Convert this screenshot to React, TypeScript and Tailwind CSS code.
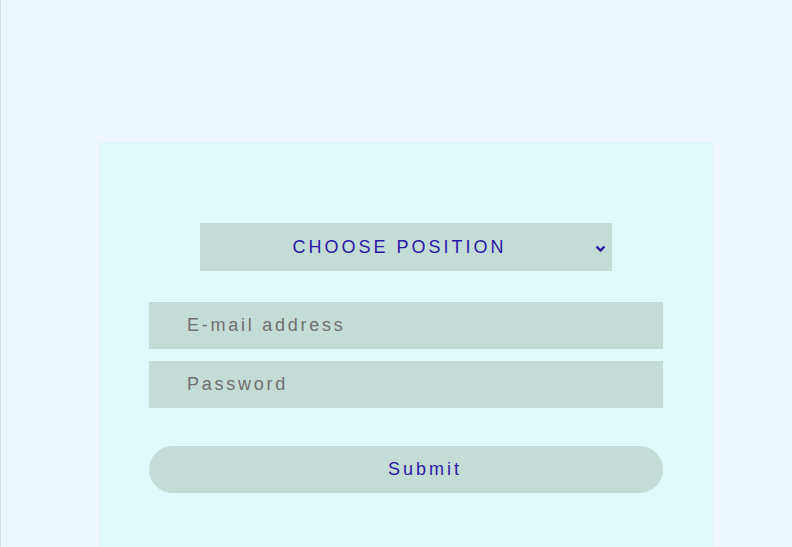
import * as React from "react";

const fieldClass =
    "h-[47px] w-full bg-[#c4dcd6] pl-[38px] text-[18px] tracking-[2.75px] text-[#6f6f6f] outline-none placeholder:text-[#6f6f6f]";

const PositionSelect = () => (
    <div className="relative h-[48px] w-[412px] bg-[#c4dcd6]">
        <div className="flex h-full items-center justify-center pr-[13px] text-[18px] tracking-[3px] text-[#2a18a8]">
            {"CHOOSE POSITION"}
        </div>
        <svg
            className="absolute right-[6px] top-[22px]"
            width="11"
            height="8"
            viewBox="0 0 11 8"
            fill="none"
            stroke="#2a18a8"
            strokeWidth="2.4"
        >
            <path d="M1.5 1.5 L5.5 5.5 L9.5 1.5" />
        </svg>
    </div>
);

const LoginCard = () => (
    <div className="ml-[98px] mt-[142px] flex w-[614px] flex-col items-center bg-[#dff9f9] pb-[60px] pt-[81px]">
        <PositionSelect />
        <div className="mt-[31px] flex w-[514px] flex-col gap-[12px]">
            <input className={fieldClass} placeholder="E-mail address" />
            <input className={fieldClass} type="password" placeholder="Password" />
        </div>
        <button className="mt-[38px] h-[47px] w-[514px] rounded-full bg-[#c4dcd6] pl-[38px] text-[18px] tracking-[3px] text-[#2a18a8]">
            {"Submit"}
        </button>
    </div>
);

export default function App() {
    return (
        <div
            className="h-[547px] overflow-hidden border-l border-[#d5dde5] bg-[#eef6fe]"
            style={{ fontFamily: '"Liberation Sans", Arial, sans-serif' }}
        >
            <LoginCard />
        </div>
    );
}
